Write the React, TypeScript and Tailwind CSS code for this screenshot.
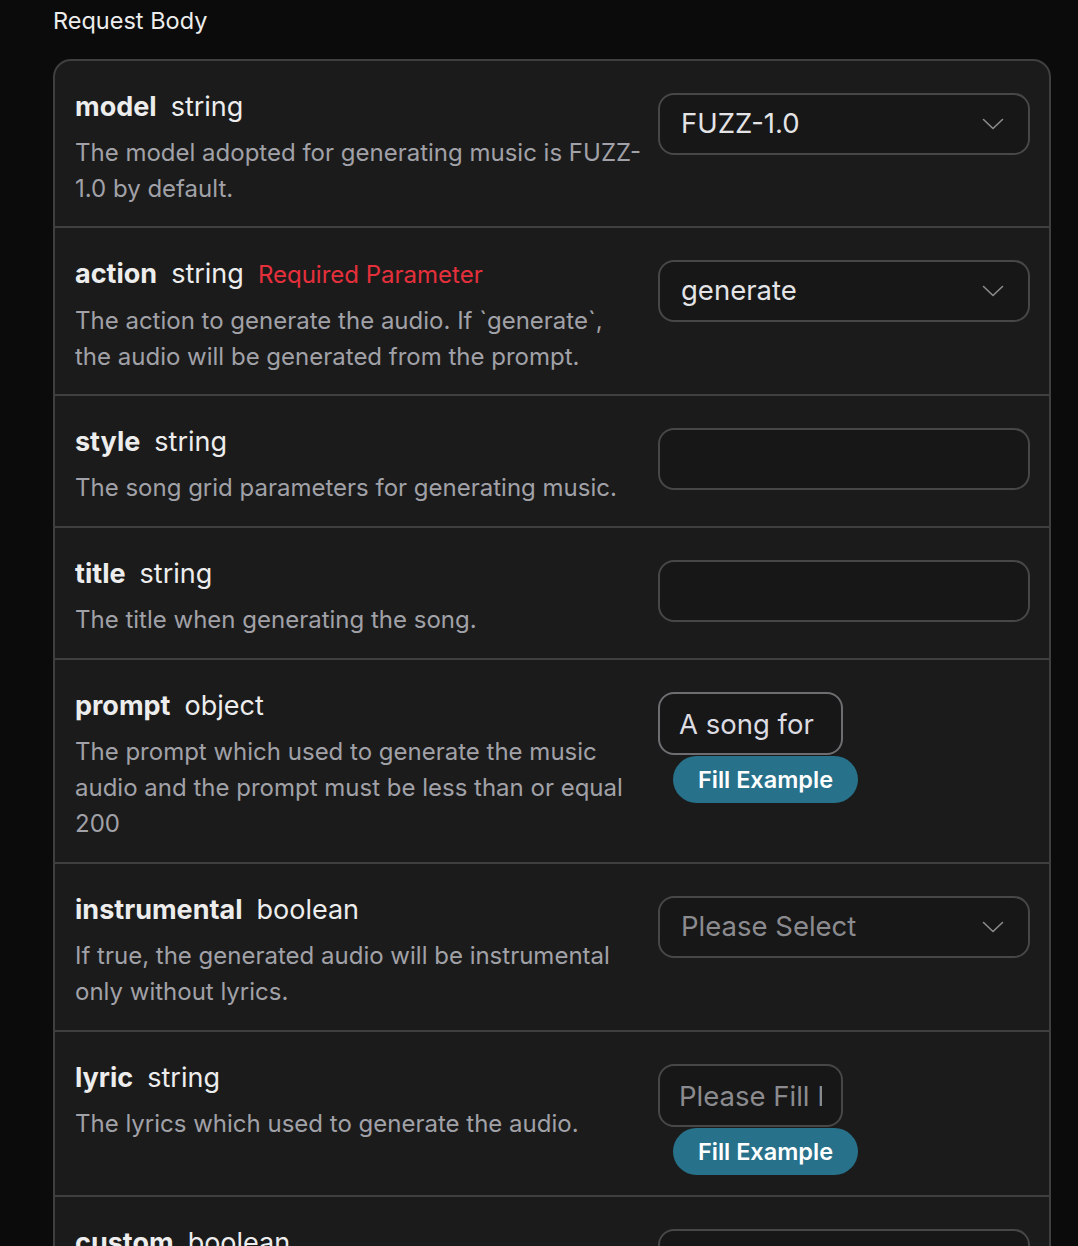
import React from 'react';

type Field = {
  name: string;
  type: string;
  required?: boolean;
  desc: string;
  control: 'select' | 'text' | 'fill';
  value?: string;
  placeholder?: string;
};

const fields: Field[] = [
  { name: 'model', type: 'string', desc: 'The model adopted for generating music is FUZZ-1.0 by default.', control: 'select', value: 'FUZZ-1.0' },
  { name: 'action', type: 'string', required: true, desc: 'The action to generate the audio. If `generate`, the audio will be generated from the prompt.', control: 'select', value: 'generate' },
  { name: 'style', type: 'string', desc: 'The song grid parameters for generating music.', control: 'text' },
  { name: 'title', type: 'string', desc: 'The title when generating the song.', control: 'text' },
  { name: 'prompt', type: 'object', desc: 'The prompt which used to generate the music audio and the prompt must be less than or equal 200', control: 'fill', value: 'A song for a summer day' },
  { name: 'instrumental', type: 'boolean', desc: 'If true, the generated audio will be instrumental only without lyrics.', control: 'select', placeholder: 'Please Select' },
  { name: 'lyric', type: 'string', desc: 'The lyrics which used to generate the audio.', control: 'fill', placeholder: 'Please Fill In' },
  { name: 'custom', type: 'boolean', desc: 'Whether to use custom mode.', control: 'select', placeholder: 'Please Select' },
];

function Chevron() {
  return (
    <svg width="22" height="12" viewBox="0 0 22 12" fill="none">
      <path d="M1.5 1.5 L11 10.5 L20.5 1.5" stroke="#8c8c8c" strokeWidth="1.6" strokeLinecap="round" strokeLinejoin="round" />
    </svg>
  );
}

function Control({ f }: { f: Field }) {
  if (f.control === 'select') {
    return (
      <div className="w-[372px] h-[62px] mt-[1px] rounded-[16px] border-2 border-[#474747] bg-[#171717] flex items-center justify-between pl-[21px] pr-[24px]">
        {f.value ? (
          <span className="text-[27.5px] text-[#e4e4e7]">{f.value}</span>
        ) : (
          <span className="text-[27.5px] text-[#8b8b8f]">{f.placeholder}</span>
        )}
        <Chevron />
      </div>
    );
  }
  if (f.control === 'text') {
    return <input readOnly className="w-[372px] h-[62px] mt-[1px] rounded-[16px] border-2 border-[#474747] bg-[#171717] px-[21px] text-[27.5px] text-[#e4e4e7] outline-none" />;
  }
  return (
    <div className="flex flex-col items-start">
      <input
        readOnly
        defaultValue={f.value}
        placeholder={f.placeholder}
        className={`w-[185px] h-[63px] mt-[1px] rounded-[16px] border-2 ${f.value ? 'border-[#6e6e72]' : 'border-[#474747]'} bg-[#171717] px-[19px] text-[27.5px] text-[#dcdce2] placeholder:text-[#8b8b8f] outline-none`}
      />
      <button className="ml-[15px] mt-[1px] w-[185px] h-[47px] rounded-full bg-[#27718a] text-[23.5px] font-semibold text-white">Fill Example</button>
    </div>
  );
}

export default function App() {
  return (
    <div className="min-h-screen bg-[#0b0b0b] pl-[53px] pr-[27px] font-['Inter',sans-serif]">
      <h2 className="pt-[6px] leading-[30px] text-[23.5px] text-[#ededed]">Request Body</h2>
      <div className="mt-[23px] rounded-[18px] border-2 border-[#3f3f3f] bg-[#1b1b1b] overflow-hidden divide-y-2 divide-[#3f3f3f]">
        {fields.map((f, i) => (
          <div key={f.name} className={`flex gap-[16px] pl-[20px] pr-[19px] pt-[31px] ${i < 2 ? 'pb-[19px]' : 'pb-[20px]'}`}>
            <div className="flex-1 min-w-0">
              <div className="flex items-baseline leading-[30px] text-[27px] text-[#ededed]">
                <span className="font-bold">{f.name}</span>
                <span className="ml-[14px]">{f.type}</span>
                {f.required && <span className="ml-[14px] text-[24px] text-[#e5303c]">Required Parameter</span>}
              </div>
              <p className="mt-[13px] leading-[36px] text-[24px] text-[#a1a1a8]">{f.desc}</p>
            </div>
            <div className="w-[372px] shrink-0">
              <Control f={f} />
            </div>
          </div>
        ))}
      </div>
    </div>
  );
}
